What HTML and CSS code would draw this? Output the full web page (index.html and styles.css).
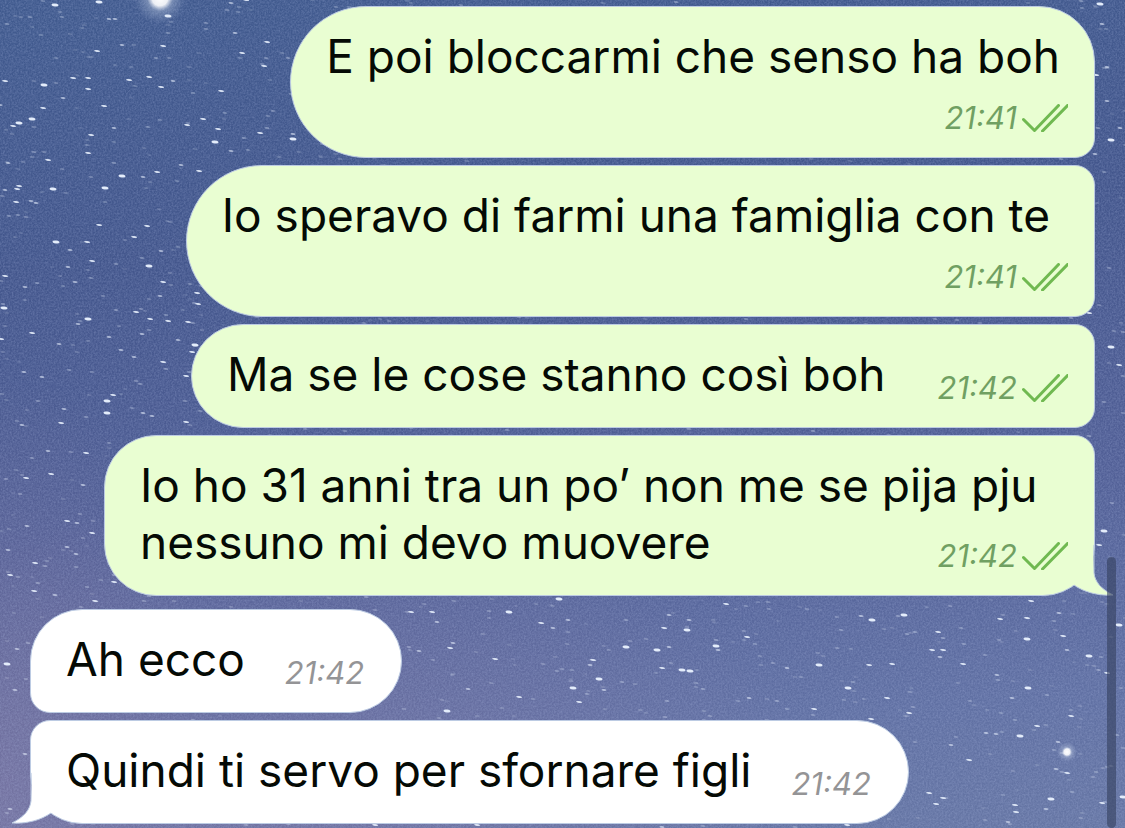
FILE: index.html
```
<!DOCTYPE html>
<html lang="it">
<head>
<meta charset="utf-8">
<meta name="viewport" content="width=device-width, initial-scale=1">
<title>Chat</title>
<link rel="stylesheet" href="styles.css">
</head>
<body>
<svg class="sky" aria-hidden="true">
  <defs>
    <radialGradient id="glow">
      <stop offset="0" stop-color="#fff"/>
      <stop offset="0.3" stop-color="#fff" stop-opacity="0.9"/>
      <stop offset="0.5" stop-color="#dbe6f5" stop-opacity="0.3"/>
      <stop offset="1" stop-color="#c8d6ee" stop-opacity="0"/>
    </radialGradient>
    <filter id="grain" x="0" y="0" width="100%" height="100%" color-interpolation-filters="sRGB">
      <feTurbulence type="fractalNoise" baseFrequency="0.57 0.53" numOctaves="3" seed="4"/>
      <feColorMatrix type="matrix" values="0 0 0 0 0.75  0 0 0 0 0.8  0 0 0 0 0.95  0.4 0 0 0 -0.12"/>
    </filter>
  </defs>
  <rect width="100%" height="100%" filter="url(#grain)"/>
  <g id="stars" fill="#e4edfb"></g>
  <circle cx="160" cy="-2" r="26" fill="url(#glow)"/>
  <circle cx="1067" cy="752" r="10" fill="url(#glow)"/>
</svg>
<main class="chat">
  <section class="group outgoing">
    <article class="bubble stacked first">
      <p class="text">E poi bloccarmi che senso ha boh</p>
      <div class="meta"><time>21:41</time><svg class="ticks" viewBox="0 0 46 28" role="img" aria-label="Letto"><path d="M1.5 15.5L12.5 26.500L36.500 1.500M20.500 27L45.500 1.500"/></svg></div>
    </article>
    <article class="bubble stacked wide">
      <p class="text">Io speravo di farmi una famiglia con te</p>
      <div class="meta"><time>21:41</time><svg class="ticks" viewBox="0 0 46 28" role="img" aria-label="Letto"><path d="M1.5 15.5L12.5 26.500L36.500 1.500M20.500 27L45.500 1.500"/></svg></div>
    </article>
    <article class="bubble">
      <p class="text">Ma se le cose stanno così boh</p>
      <div class="meta"><time>21:42</time><svg class="ticks" viewBox="0 0 46 28" role="img" aria-label="Letto"><path d="M1.5 15.5L12.5 26.500L36.500 1.500M20.500 27L45.500 1.500"/></svg></div>
    </article>
    <article class="bubble long last">
      <p class="text">Io ho 31 anni tra un po’ non me se pija pju<br>nessuno mi devo muovere</p>
      <div class="meta"><time>21:42</time><svg class="ticks" viewBox="0 0 46 28" role="img" aria-label="Letto"><path d="M1.5 15.5L12.5 26.500L36.500 1.500M20.500 27L45.500 1.500"/></svg></div>
      <svg class="tail" viewBox="0 0 54 54" aria-hidden="true"><path class="tail-fill" d="M12 42L12 8L33 0L34 30C35 39 41 46 53 52C38 53 24 49 14 42Z"/><path class="tail-edge" d="M34 2L34 30C35 39 41 46 53 52C38 53 24 49 14 42"/></svg>
    </article>
  </section>
  <section class="group incoming">
    <article class="bubble first">
      <p class="text">Ah ecco</p>
      <div class="meta"><time>21:42</time></div>
    </article>
    <article class="bubble last">
      <p class="text">Quindi ti servo per sfornare figli</p>
      <div class="meta"><time>21:42</time></div>
      <svg class="tail" viewBox="0 0 54 54" aria-hidden="true"><path class="tail-fill" d="M12 42L12 8L33 0L34 30C35 39 41 46 53 52C38 53 24 49 14 42Z"/><path class="tail-edge" d="M34 2L34 30C35 39 41 46 53 52C38 53 24 49 14 42"/></svg>
    </article>
  </section>
</main>
<div class="scroll-thumb" aria-hidden="true"></div>
<script src="stars.js"></script>
</body>
</html>
```
FILE: styles.css
```
* {
  box-sizing: border-box;
}

body {
  position: relative;
  min-height: 100vh;
  margin: 0;
  overflow: hidden;
  font-family: Inter, "Liberation Sans", sans-serif;
  color: #050a05;
  background:
    radial-gradient(ellipse 50% 40% at 25% 100%, rgba(132, 116, 160, 0.45), rgba(132, 116, 160, 0)),
    radial-gradient(ellipse 20% 50% at 0% 95%, rgba(134, 120, 160, 0.4), rgba(134, 120, 160, 0)),
    linear-gradient(175deg, #405a8e 0%, #43568c 30%, #515f96 60%, #6070a3 85%, #6676a4 100%);
}

.sky {
  position: absolute;
  inset: 0;
  width: 100%;
  height: 100%;
}

.chat {
  position: relative;
  display: flex;
  flex-direction: column;
  gap: 13px;
  padding: 6px 30px 4px;
}

.group {
  display: flex;
  flex-direction: column;
  gap: 7px;
}

.outgoing {
  --fill: #e9fed2;
  align-items: flex-end;
}

.incoming {
  --fill: #ffffff;
  align-items: flex-start;
}

.bubble {
  position: relative;
  display: flex;
  align-items: flex-end;
  gap: 52px;
  padding: 21px 26px 24px 35px;
  border: 1px solid #bccbe3;
  background: var(--fill);
}

.outgoing .bubble {
  border-radius: 52px 20px 20px 52px;
}

.outgoing .stacked {
  flex-direction: column;
  gap: 18px;
  border-radius: 76px 20px 20px 76px;
}

.outgoing .first {
  border-top-right-radius: 56px;
}

.outgoing .last {
  border-bottom-right-radius: 52px;
}

.incoming .bubble {
  gap: 40px;
  padding-right: 37px;
  border-radius: 20px 52px 52px 20px;
}

.incoming .first {
  border-top-left-radius: 52px;
}

.incoming .last {
  border-bottom-left-radius: 52px;
}

.text {
  margin: 0;
  font-size: 46px;
  line-height: 57px;
}

.stacked .text {
  align-self: flex-start;
  padding-right: 8px;
}

.wide .text {
  padding-right: 18px;
}

.meta {
  display: flex;
  align-items: center;
  gap: 5px;
  height: 30px;
  font-size: 31px;
  font-style: italic;
  line-height: 30px;
  color: #70a062;
}

.incoming .meta {
  color: #949496;
}

.long .meta {
  margin-left: -152px;
}

.ticks {
  width: 46px;
  height: 28px;
  fill: none;
  stroke: #70b951;
  stroke-width: 3;
  stroke-linecap: round;
  stroke-linejoin: round;
}

.tail {
  position: absolute;
  right: -20px;
  bottom: -2px;
  width: 54px;
  height: 54px;
}

.incoming .tail {
  right: auto;
  left: -20px;
  transform: scaleX(-1);
}

.tail-fill {
  fill: var(--fill);
}

.tail-edge {
  fill: none;
  stroke: #bccbe3;
}

.scroll-thumb {
  position: absolute;
  top: 557px;
  right: 9px;
  bottom: 0;
  width: 9px;
  border-radius: 5px;
  background: rgba(51, 63, 94, 0.6);
}
```
FILE: stars.js
```
// Bright stars: x, y, size (1 = faint, 3 = bright)
const bright = [
  [55,5,3],[99,2,3],[168,16,3],[97,51,2],[122,45,1],[163,46,2],[115,19,1],[109,19,1],[5,81,2],[44,85,3],[73,78,2],[88,78,2],
  [88,89,2],[129,80,2],[149,77,2],[161,87,2],[173,81,1],[221,91,2],[264,66,2],[242,53,2],[267,42,2],[235,33,1],[231,3,1],[246,0,2],
  [43,108,2],[63,98,1],[104,106,2],[32,119,3],[19,123,3],[13,126,2],[0,105,1],[91,135,2],[114,128,1],[88,153,2],[48,160,2],
  [203,119,2],[187,125,2],[218,129,2],[215,142,3],[260,133,2],[293,139,3],[293,134,1],[231,151,1],[181,165,1],[199,171,2],
  [157,172,2],[122,176,3],[143,177,1],[105,188,3],[53,189,3],[19,186,2],[17,189,2],[5,190,1],[16,202,2],[31,201,1],[36,203,1],[8,163,1],
  [99,225,2],[147,226,2],[56,242,3],[87,242,2],[134,237,2],[70,250,1],[161,251,1],[92,261,2],[149,266,3],[68,267,1],[5,276,2],
  [163,282,2],[25,287,1],[197,293,2],[75,282,1],[160,296,1],
  [4,308,3],[136,312,2],[88,319,3],[78,324,1],[150,319,2],[168,321,2],[188,322,2],[198,304,2],[195,345,3],[192,352,2],[32,333,2],
  [1,339,2],[59,344,1],[142,334,1],[109,337,1],[134,357,1],[163,362,2],[121,350,1],[178,340,1],[24,372,1],[42,377,1],[186,376,2],
  [113,395,2],[107,401,3],[107,413,3],[64,409,1],[61,423,2],[143,413,1],[22,425,1],[186,422,2],[152,416,1],[86,453,2],[48,451,1],
  [51,474,2],[26,478,2],[83,485,1],[67,521,2],[77,523,1],[92,533,2],[27,526,1],[35,563,2],[10,575,2],[34,591,2],[55,595,1],
  [95,601,2],[114,582,2],[8,550,1],[67,547,1],[76,554,1],[7,664,3],[17,649,1],[15,690,1],[10,809,1],[25,754,1],
  [1100,4,3],[1102,24,1],[1107,67,1],[1096,75,2],[1107,101,1],[1120,128,1],[1111,140,3],[1095,154,1],[1111,347,3],[1119,365,2],[1089,313,2],
  [1104,531,3],[1099,545,2],[1119,625,3],[1000,619,2],[1031,601,2],[1027,618,2],[1027,639,3],[1063,636,2],[1089,656,3],[1067,650,1],[1059,613,1],
  [943,650,2],[932,650,2],[938,632,2],[963,664,2],[940,657,1],[997,675,1],[1028,688,3],[1012,698,1],[1107,673,2],[1071,716,2],
  [1037,726,2],[1020,736,3],[986,733,1],[996,734,1],[951,745,1],[969,760,2],[1058,742,1],[1067,773,2],[1056,769,1],
  [929,793,2],[943,798,2],[936,804,2],[1015,805,2],[1016,812,2],[1051,799,3],[1046,809,1],[1102,803,2],[1123,797,3],[1008,822,1],
  [559,599,3],[509,612,3],[411,612,2],[432,612,2],[541,623,2],[553,628,1],[568,620,1],[437,622,1],[726,604,2],[664,628,2],[669,615,1],
  [687,630,3],[689,620,1],[626,647,3],[657,650,3],[669,647,1],[716,646,3],[718,650,1],[747,637,2],[872,620,3],[904,615,3],[861,616,1],
  [450,648,2],[453,643,1],[419,651,1],[495,659,2],[593,660,2],[590,665,1],[662,668,2],[682,670,3],[690,671,3],[599,679,3],
  [573,688,3],[604,690,1],[519,697,2],[579,702,2],[468,689,1],[447,711,3],[787,668,1],[819,665,3],[869,665,2],[892,664,2],
  [848,688,3],[887,698,2],[814,709,2],[909,713,2],[871,719,2],[749,698,1],[477,825,2],[847,825,2],[662,827,1],[375,825,2]
];

const layer = document.getElementById("stars");
const widths = { 1: 5, 2: 6, 3: 7 };
const heights = { 1: 2, 2: 2, 3: 3 };

function addStar(x, y, size, opacity) {
  const star = document.createElementNS("http://www.w3.org/2000/svg", "ellipse");
  star.setAttribute("cx", x);
  star.setAttribute("cy", y);
  star.setAttribute("rx", widths[size] / 2);
  star.setAttribute("ry", heights[size] / 2);
  star.setAttribute("opacity", opacity);
  star.setAttribute("transform", `rotate(8 ${x} ${y})`);
  layer.append(star);
}

// Faint background dust, repeatable between loads
let seed = 71;
function random() {
  seed = (seed * 16807) % 2147483647;
  return seed / 2147483647;
}
for (let i = 0; i < 1500; i++) {
  addStar(Math.round(random() * 1125), Math.round(random() * 828), 1, 0.1 + random() * 0.25);
}

bright.forEach(([x, y, size]) => addStar(x, y, size, [0, 0.6, 0.9, 1][size]));
```
